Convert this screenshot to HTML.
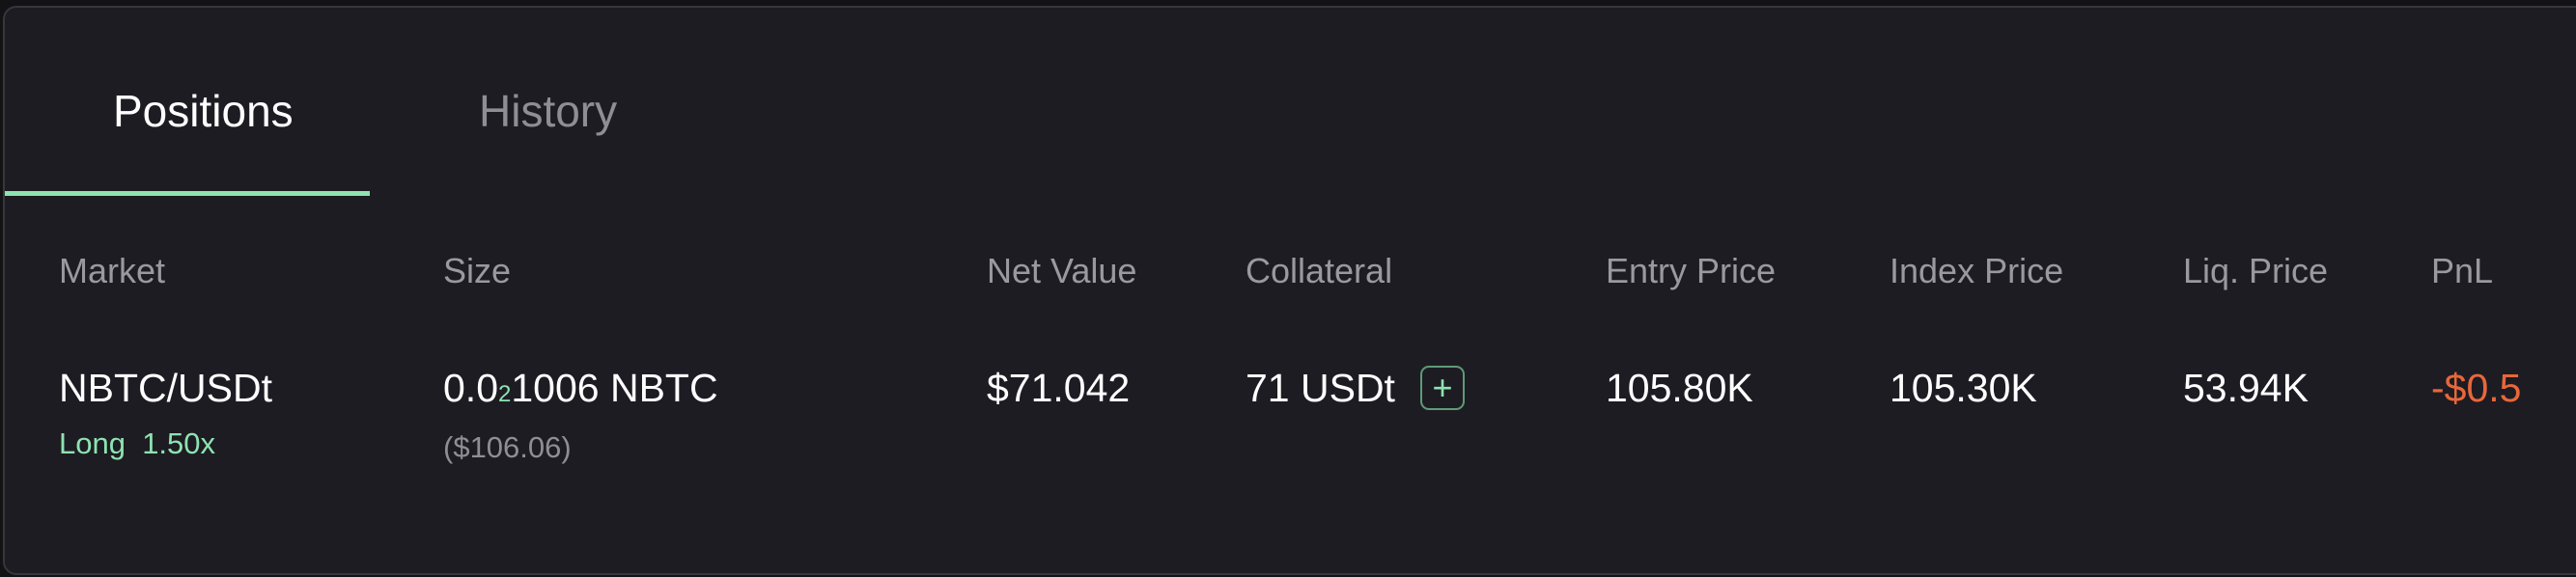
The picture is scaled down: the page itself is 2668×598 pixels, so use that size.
<!DOCTYPE html>
<html><head><style>
html,body{margin:0;padding:0;width:2668px;height:598px;background:#131315;overflow:hidden;font-family:"Liberation Sans",sans-serif;}
.card{position:absolute;left:3px;top:6px;width:2680px;height:586px;background:#1d1c23;border:2px solid #37363c;border-radius:14px;}
.t{position:absolute;white-space:nowrap;line-height:1;}
.tab{font-size:46px;top:92px}
.h{font-size:36px;color:#9a999e;top:263px}
.v{font-size:41px;color:#fff;top:382px}
.s{font-size:31px;top:444px}
</style></head><body>
<div class="card"></div>
<div class="t tab" style="left:117px;color:#fff">Positions</div>
<div class="t tab" style="left:496px;color:#8f8e93">History</div>
<div style="position:absolute;left:5px;top:198px;width:378px;height:5px;background:#8ee3b0"></div>
<div class="t h" style="left:61px">Market</div>
<div class="t h" style="left:459px">Size</div>
<div class="t h" style="left:1022px">Net Value</div>
<div class="t h" style="left:1290px">Collateral</div>
<div class="t h" style="left:1663px">Entry Price</div>
<div class="t h" style="left:1957px">Index Price</div>
<div class="t h" style="left:2261px">Liq. Price</div>
<div class="t h" style="left:2518px">PnL</div>
<div class="t v" style="left:61px">NBTC/USDt</div>
<div class="t v" style="left:459px">0.0<span style="color:#8ee3b0;font-size:24px">2</span>1006 NBTC</div>
<div class="t v" style="left:1022px">$71.042</div>
<div class="t v" style="left:1290px">71 USDt</div>
<div style="position:absolute;left:1471px;top:379px;width:42px;height:42px;border:2px solid #5f9a78;border-radius:9px;color:#8ee3b0;font-size:36px;line-height:42px;text-align:center;font-family:'Liberation Sans',sans-serif">+</div>
<div class="t v" style="left:1663px">105.80K</div>
<div class="t v" style="left:1957px">105.30K</div>
<div class="t v" style="left:2261px">53.94K</div>
<div class="t v" style="left:2518px;color:#e8673a">-$0.5</div>
<div class="t s" style="left:61px;color:#8ee3b0">Long&nbsp; 1.50x</div>
<div class="t s" style="left:459px;color:#8f8e93;top:448px">($106.06)</div>
</body></html>
